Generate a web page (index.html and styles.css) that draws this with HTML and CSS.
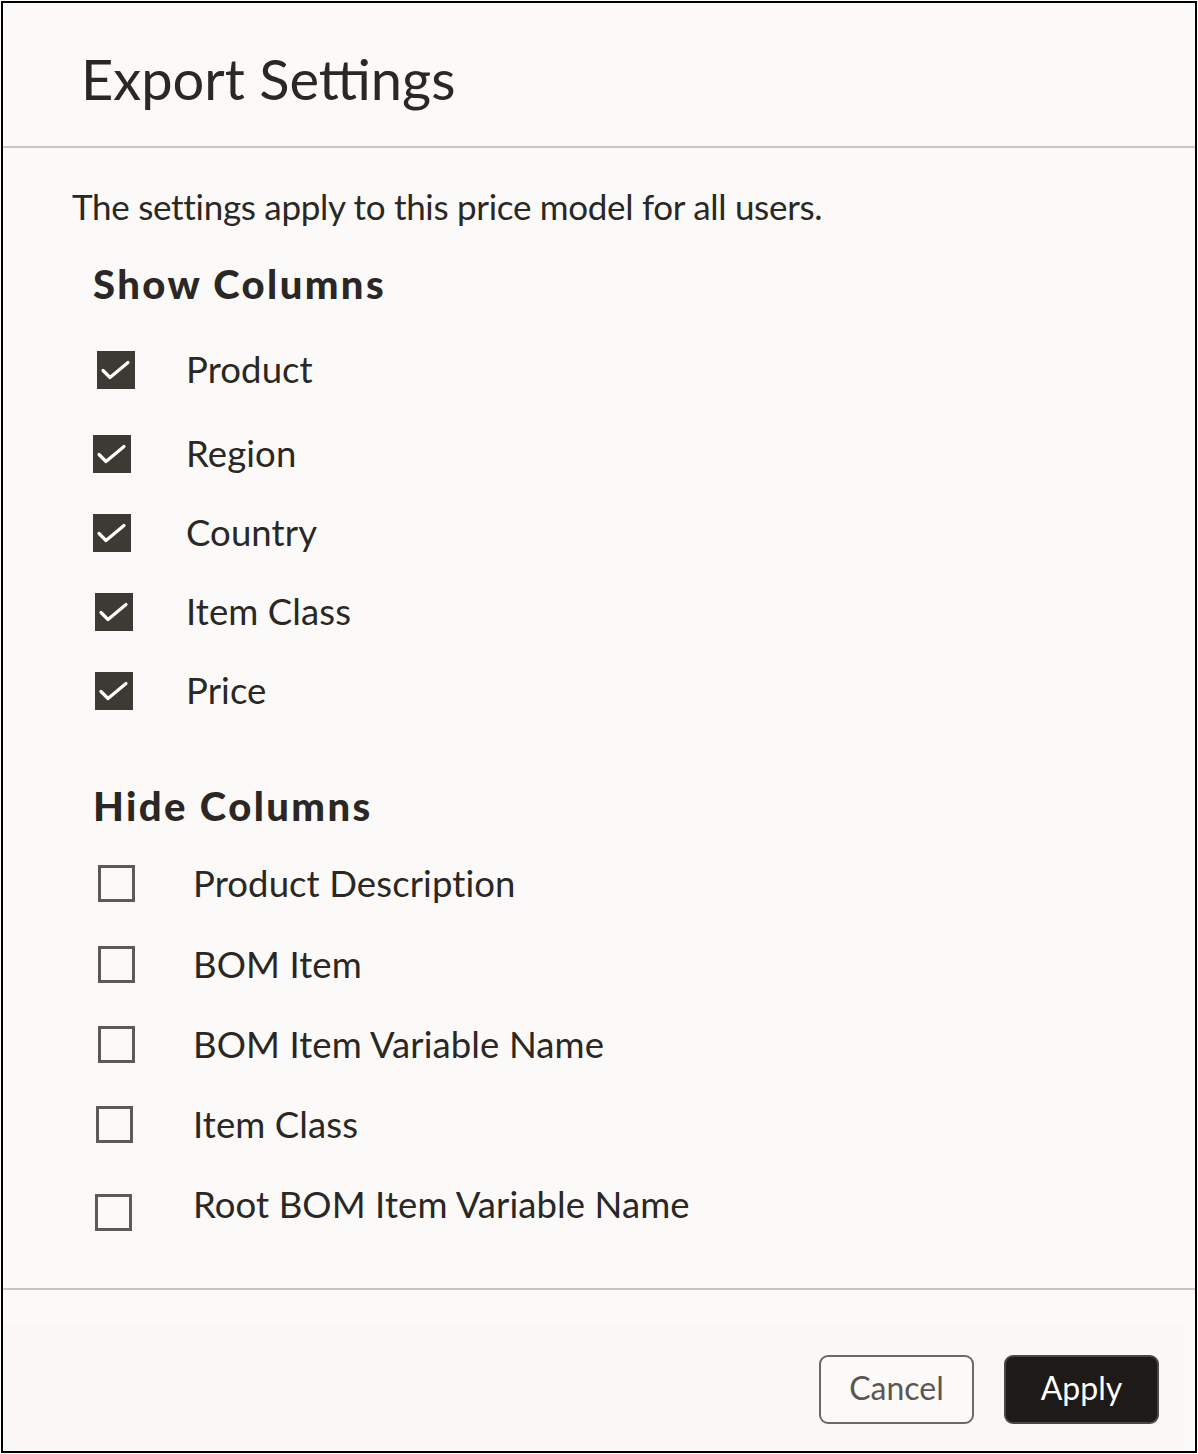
FILE: index.html
```html
<!DOCTYPE html>
<html lang="en">
<head>
<meta charset="utf-8">
<title>Export Settings</title>
<link rel="stylesheet" href="styles.css">
</head>
<body>
<div class="dialog">
  <header class="dialog-header">
    <h1 class="dialog-title">Export Settings</h1>
  </header>
  <main class="dialog-body">
    <p class="intro">The settings apply to this price model for all users.</p>

    <h2 class="group-title">Show Columns</h2>
    <ul class="option-list">
      <li class="option option--first">
        <span class="box box--checked nudge-r2"><svg viewBox="0 0 38 38" class="tick"><polyline points="6,19.5 13,26.5 31,11.5"/></svg></span>
        <span class="label">Product</span>
      </li>
      <li class="option">
        <span class="box box--checked nudge-l2"><svg viewBox="0 0 38 38" class="tick"><polyline points="6,19.5 13,26.5 31,11.5"/></svg></span>
        <span class="label">Region</span>
      </li>
      <li class="option">
        <span class="box box--checked nudge-l2"><svg viewBox="0 0 38 38" class="tick"><polyline points="6,19.5 13,26.5 31,11.5"/></svg></span>
        <span class="label">Country</span>
      </li>
      <li class="option">
        <span class="box box--checked"><svg viewBox="0 0 38 38" class="tick"><polyline points="6,19.5 13,26.5 31,11.5"/></svg></span>
        <span class="label">Item Class</span>
      </li>
      <li class="option">
        <span class="box box--checked"><svg viewBox="0 0 38 38" class="tick"><polyline points="6,19.5 13,26.5 31,11.5"/></svg></span>
        <span class="label">Price</span>
      </li>
    </ul>

    <h2 class="group-title group-title--second">Hide Columns</h2>
    <ul class="option-list option-list--hide">
      <li class="option">
        <span class="box box--empty nudge-r1"></span>
        <span class="label">Product Description</span>
      </li>
      <li class="option option--down">
        <span class="box box--empty nudge-r1"></span>
        <span class="label">BOM Item</span>
      </li>
      <li class="option">
        <span class="box box--empty nudge-r1"></span>
        <span class="label">BOM Item Variable Name</span>
      </li>
      <li class="option">
        <span class="box box--empty nudge-l1"></span>
        <span class="label">Item Class</span>
      </li>
      <li class="option">
        <span class="box box--empty box--low nudge-l2"></span>
        <span class="label">Root BOM Item Variable Name</span>
      </li>
    </ul>
  </main>
  <footer class="dialog-footer">
    <div class="footer-inner">
      <button class="btn btn--secondary" type="button">Cancel</button>
      <button class="btn btn--primary" type="button">Apply</button>
    </div>
  </footer>
</div>
</body>
</html>
```

FILE: styles.css
```css
* { box-sizing: border-box; }

html, body {
  margin: 0;
  padding: 0;
  background: #ffffff;
}

body {
  font-family: Lato, "Noto Sans", "Liberation Sans", sans-serif;
  color: #2a2724;
}

.dialog {
  margin: 1px;
  width: 1196px;
  height: 1452px;
  border: 2px solid #000000;
  background: #fbfaf9;
  display: flex;
  flex-direction: column;
}

.dialog-header {
  height: 145px;
  padding: 48px 0 0 78px;
  border-bottom: 2px solid #c8c6c3;
}

.dialog-title {
  margin: 0;
  font-size: 56px;
  line-height: 1;
  font-weight: 400;
  color: #2a2724;
}

.dialog-body {
  flex: 1;
  padding: 41px 0 0 69px;
}

.intro {
  margin: 0;
  font-size: 35px;
  letter-spacing: -0.3px;
  line-height: 1;
}

.group-title {
  margin: 40px 0 0 21px;
  font-size: 40px;
  line-height: 1;
  font-weight: 900;
  letter-spacing: 2.4px;
}

.group-title--second {
  margin-top: 56px;
}

.option-list {
  list-style: none;
  margin: 26px 0 0 23px;
  padding: 0;
}

.option-list--hide {
  margin-top: 17px;
  margin-left: 25px;
}

.option {
  height: 79px;
  display: flex;
  align-items: center;
}

.option--first {
  margin-bottom: 5px;
}

.option-list--hide .option {
  height: 80px;
}

.option-list--hide .option--down {
  height: 81px;
  padding-top: 2px;
}

.box {
  flex: none;
  width: 38px;
  height: 38px;
  display: flex;
  align-items: center;
  justify-content: center;
}

.box--checked {
  background: #3d3934;
}

.tick {
  width: 38px;
  height: 38px;
  display: block;
}

.tick polyline {
  fill: none;
  stroke: #ffffff;
  stroke-width: 3.2;
  stroke-linecap: round;
  stroke-linejoin: round;
}

.box--empty {
  width: 37px;
  height: 37px;
  border: 3px solid #5f5a55;
}

.box--low {
  margin-top: 16px;
}

.nudge-r2 { margin-left: 2px; margin-right: -2px; }
.nudge-r1 { margin-left: 1px; margin-right: -1px; }
.nudge-l1 { margin-left: -1px; margin-right: 1px; }
.nudge-l2 { margin-left: -2px; margin-right: 2px; }

.label {
  margin-left: 53px;
  font-size: 36.5px;
  letter-spacing: 0.1px;
  line-height: 1;
}

.option-list--hide .label {
  margin-left: 59px;
}

.dialog-footer {
  height: 163px;
  border-top: 2px solid #c8c6c3;
  padding-top: 35px;
}

.footer-inner {
  height: 126px;
  margin-right: 12px;
  background: #f9f8f6;
  display: flex;
  justify-content: flex-end;
  align-items: flex-start;
  padding: 30px 24px 0 0;
  gap: 30px;
}

.btn {
  width: 155px;
  height: 69px;
  border-radius: 9px;
  font-family: Lato, "Noto Sans", "Liberation Sans", sans-serif;
  font-size: 32px;
  line-height: 1;
  padding: 0 0 4px 0;
  cursor: pointer;
}

.btn--secondary {
  background: #fbfaf9;
  border: 2px solid #6d6863;
  color: #5a5651;
}

.btn--primary {
  background: #1d1a17;
  border: 2px solid #4a4642;
  color: #ffffff;
}
```
